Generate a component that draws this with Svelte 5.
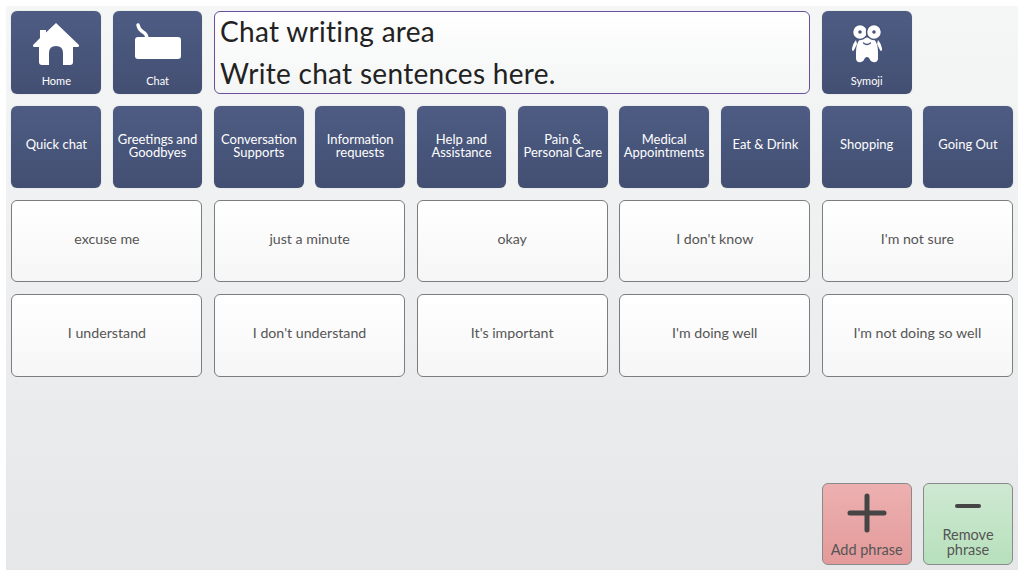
<script>
const categories = [
	['Quick chat'],
	['Greetings and', 'Goodbyes'],
	['Conversation', 'Supports'],
	['Information', 'requests'],
	['Help and', 'Assistance'],
	['Pain &', 'Personal Care'],
	['Medical', 'Appointments'],
	['Eat & Drink'],
	['Shopping'],
	['Going Out']
];

const phrases = [
	'excuse me',
	'just a minute',
	'okay',
	"I don't know",
	"I'm not sure",
	'I understand',
	"I don't understand",
	"It's important",
	"I'm doing well",
	"I'm not doing so well"
];
</script>

<div class="page">
	<div class="board">
		<button class="key nav">
			<svg class="icon" width="48" height="44" viewBox="0 0 48 44">
				<path fill="#fff" d="M24 1 L47 23 Q47.500 25 45 25 L41 25 L41 40 Q41 43 38 43 L31 43 L31 31 Q31 24 24 24 Q17 24 17 31 L17 43 L10 43 Q7 43 7 40 L7 25 L3 25 Q0.500 25 1 23 L8 16 L8 8 L14 8 L14 10.500 Z"/>
			</svg>
			<span class="icon-label">Home</span>
		</button>
		<button class="key nav">
			<svg class="icon" width="48" height="44" viewBox="0 0 48 44">
				<path fill="none" stroke="#fff" stroke-width="3.500" stroke-linecap="round" d="M4 3 Q5 8 9 10 Q13 12 13 17"/>
				<rect fill="#fff" x="1" y="15" width="46" height="22" rx="3"/>
			</svg>
			<span class="icon-label">Chat</span>
		</button>
		<div class="writer">
			<div>Chat writing area</div>
			<div>Write chat sentences here.</div>
		</div>
		<button class="key nav symoji">
			<svg class="icon" width="48" height="44" viewBox="0 0 48 44">
				<path fill="#fff" d="M17 17 Q24 14 31 17 Q35 22 35 30 L35 37 Q34 41 30 40 Q27 39 26 36 Q24 34 22 36 Q21 39 18 40 Q14 41 13 37 L13 30 Q13 22 17 17 Z"/>
				<path fill="#fff" d="M13 18 Q9 23 9 28 Q10 30 11 28 L14 22 Z M35 18 Q39 23 39 28 Q38 30 37 28 L34 22 Z"/>
				<circle fill="#fff" stroke="#48567c" stroke-width="1.500" cx="17" cy="10" r="7.500"/>
				<circle fill="#fff" stroke="#48567c" stroke-width="1.500" cx="31" cy="10" r="7.500"/>
				<circle fill="#48567c" cx="17" cy="10" r="1.800"/>
				<circle fill="#48567c" cx="31" cy="10" r="1.800"/>
				<path fill="none" stroke="#48567c" stroke-width="1.300" stroke-linecap="round" d="M20.500 21 Q24 24 27.500 21"/>
			</svg>
			<span class="icon-label">Symoji</span>
		</button>

		{#each categories as lines, i}
			<button class="key category" class:first={i === 0} class:single={lines.length === 1}>
				{#each lines as line}
					<span>{line}</span>
				{/each}
			</button>
		{/each}

		{#each phrases as phrase}
			<button class="phrase">{phrase}</button>
		{/each}

		<button class="action add">
			<svg width="40" height="40" viewBox="0 0 40 40">
				<path fill="none" stroke="#454545" stroke-width="5" stroke-linecap="round" d="M20 3 V37 M3 20 H37"/>
			</svg>
			<span>Add phrase</span>
		</button>
		<button class="action remove">
			<svg width="28" height="6" viewBox="0 0 28 6">
				<path fill="none" stroke="#454545" stroke-width="4" stroke-linecap="round" d="M3 3 H25"/>
			</svg>
			<span>Remove<br>phrase</span>
		</button>
	</div>
</div>

<style>
:global(body) {
	background: #fff;
}

.page {
	width: 1024px;
	height: 576px;
	box-sizing: border-box;
	padding: 6px;
	font-family: Lato, sans-serif;
}

.board {
	box-sizing: border-box;
	width: 1012px;
	height: 564px;
	padding: 5.400px 5.150px 5px 5.450px;
	display: grid;
	grid-template-columns: repeat(10, minmax(0, 1fr));
	grid-template-rows: repeat(6, minmax(0, 1fr));
	gap: 11.800px 11.600px;
	background: linear-gradient(#f5f6f6, #e6e7e9);
}

button {
	all: unset;
	box-sizing: border-box;
	display: flex;
	flex-direction: column;
	align-items: center;
	justify-content: center;
	text-align: center;
}

.key {
	background: linear-gradient(#4e5c84, #434f72);
	border-radius: 6px;
	color: #fff;
	font-size: 13px;
	line-height: 13px;
	box-shadow: 0 0 1px rgba(0, 0, 0, 0.3);
}

.category {
	padding-bottom: 2px;
}

.category.single {
	padding-bottom: 5px;
}

.category.first {
	grid-column: 1;
}

.nav {
	justify-content: flex-start;
	padding-top: 11px;
}

.icon {
	display: block;
}

.icon-label {
	margin-top: 8px;
	font-size: 11px;
	line-height: 13px;
}

.writer {
	grid-column: span 6;
	box-sizing: border-box;
	padding: 0 5px;
	display: flex;
	flex-direction: column;
	gap: 4px;
	background: linear-gradient(#fff, #f4f5f5);
	border: 1px solid #6a4f9c;
	border-radius: 6px;
	color: #222;
	font-size: 28px;
	line-height: 38px;
	letter-spacing: 0.3px;
}

.symoji {
	grid-column: 9;
}

.phrase {
	grid-column: span 2;
	padding-bottom: 5px;
	background: linear-gradient(#fff, #f6f6f6);
	border: 1px solid #7d7d7d;
	border-radius: 6px;
	color: #555;
	font-size: 14.200px;
}

.action {
	justify-content: flex-end;
	padding-bottom: 7px;
	border: 1px solid #8a8a8a;
	border-radius: 6px;
	color: #555;
	font-size: 14.500px;
	line-height: 15px;
}

.add {
	grid-column: 9;
	grid-row: 6;
	background: linear-gradient(#edb0b0, #e39a9a);
}

.add svg {
	margin-bottom: 9px;
}

.remove {
	grid-column: 10;
	grid-row: 6;
	background: linear-gradient(#cfe9d2, #b7e0bc);
}

.remove svg {
	margin-bottom: 18px;
}
</style>
